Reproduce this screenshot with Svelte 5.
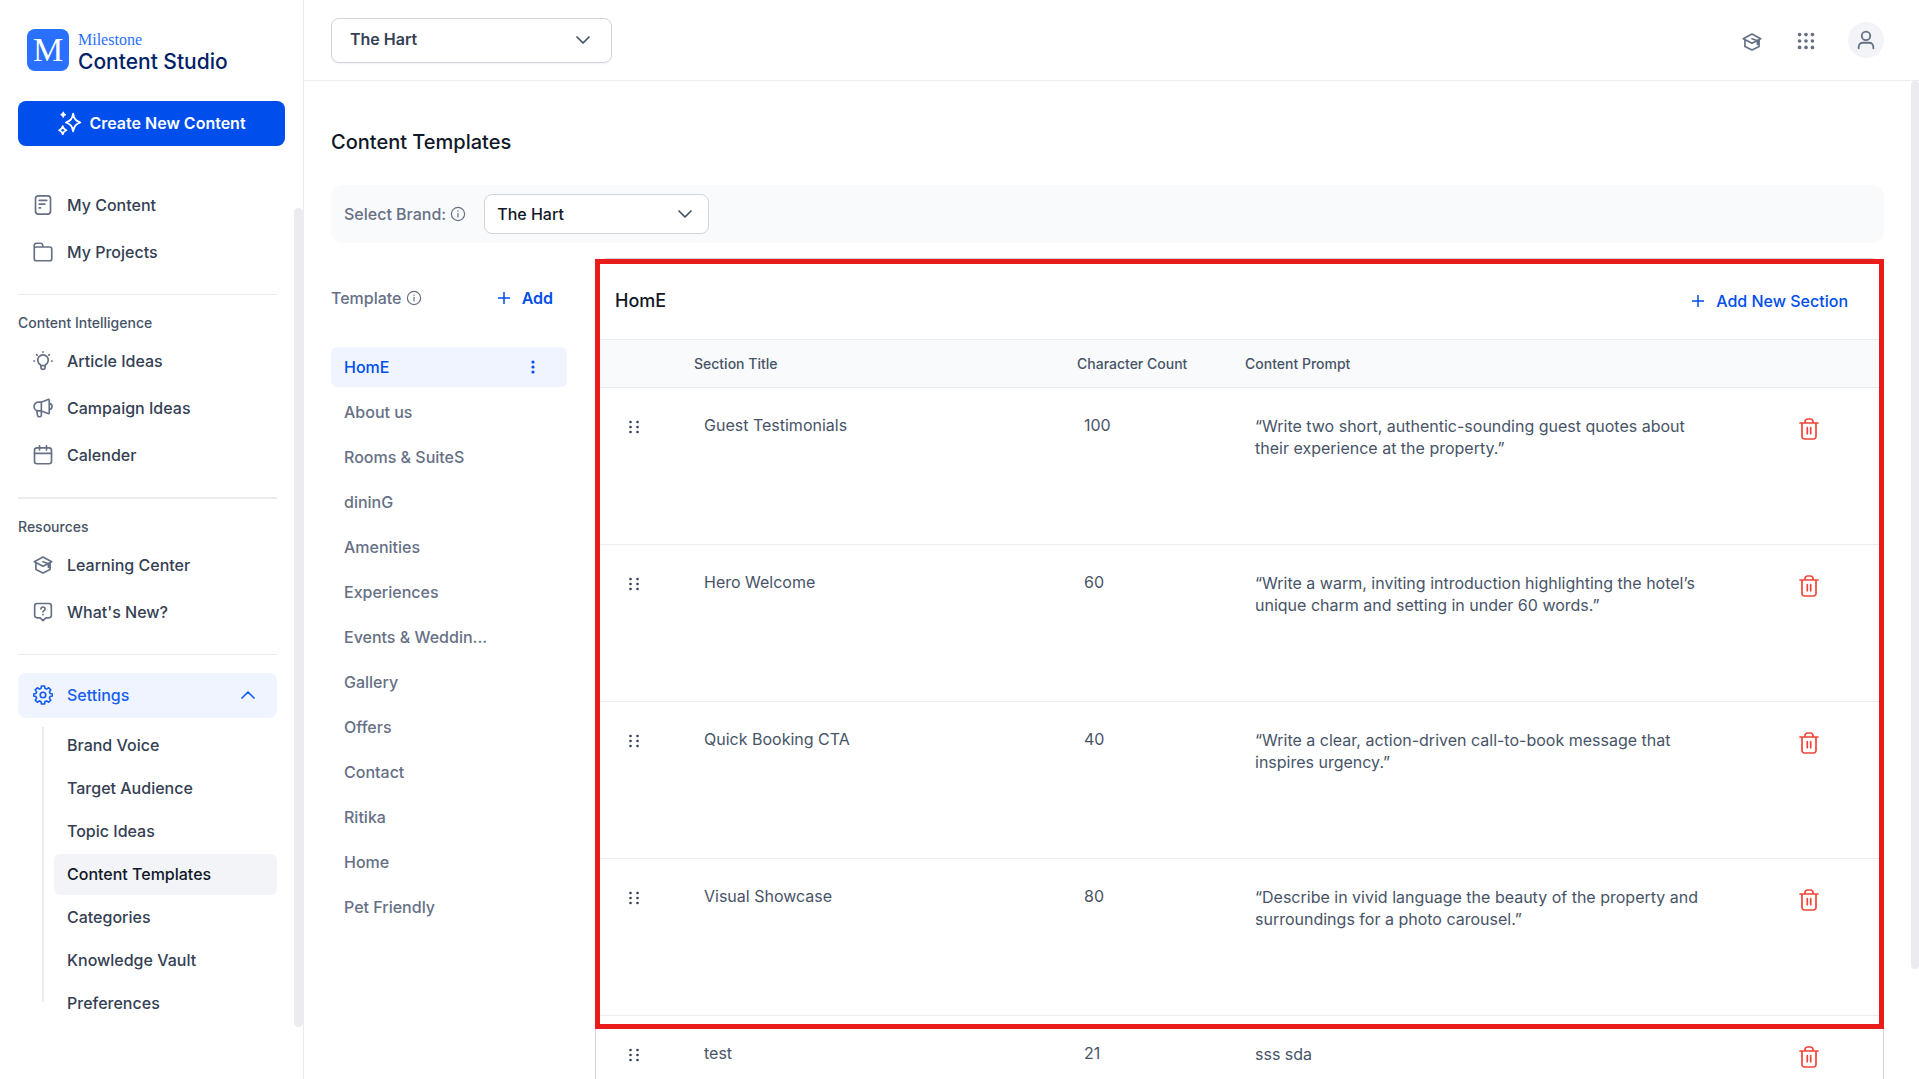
<script lang="ts">
    type NavItem = { label: string; icon: string };

    const mainLinks: NavItem[] = [
        { label: "My Content", icon: "file" },
        { label: "My Projects", icon: "folder" },
    ];

    const intelligenceLinks: NavItem[] = [
        { label: "Article Ideas", icon: "bulb" },
        { label: "Campaign Ideas", icon: "megaphone" },
        { label: "Calender", icon: "calendar" },
    ];

    const resourceLinks: NavItem[] = [
        { label: "Learning Center", icon: "learn" },
        { label: "What's New?", icon: "question" },
    ];

    const settingsLinks = [
        "Brand Voice",
        "Target Audience",
        "Topic Ideas",
        "Content Templates",
        "Categories",
        "Knowledge Vault",
        "Preferences",
    ];

    const templates = [
        "HomE",
        "About us",
        "Rooms & SuiteS",
        "dininG",
        "Amenities",
        "Experiences",
        "Events & Weddings",
        "Gallery",
        "Offers",
        "Contact",
        "Ritika",
        "Home",
        "Pet Friendly",
    ];

    const sections = [
        {
            title: "Guest Testimonials",
            count: 100,
            prompt: "“Write two short, authentic-sounding guest quotes about their experience at the property.”",
        },
        {
            title: "Hero Welcome",
            count: 60,
            prompt: "“Write a warm, inviting introduction highlighting the hotel’s unique charm and setting in under 60 words.”",
        },
        {
            title: "Quick Booking CTA",
            count: 40,
            prompt: "“Write a clear, action-driven call-to-book message that inspires urgency.”",
        },
        {
            title: "Visual Showcase",
            count: 80,
            prompt: "“Describe in vivid language the beauty of the property and surroundings for a photo carousel.”",
        },
        { title: "test", count: 21, prompt: "sss sda" },
    ];

    let activePage = $state("Content Templates");
    let activeTemplate = $state("HomE");
    let settingsOpen = $state(true);

    const shorten = (name: string) => (name.length > 15 ? `${name.slice(0, 15)}...` : name);
</script>

{#snippet icon(name: string)}
    <svg class="icon" viewBox="0 0 24 24" aria-hidden="true">
        {#if name === "file"}
            <rect x="3" y="1" width="18" height="22" rx="3.500" />
            <path d="M7.500 6.500h9M7.500 11h6.500M7.500 15.500h1.500" />
        {:else if name === "folder"}
            <path d="M1.500 7V4A2.500 2.500 0 0 1 4 1.500h5a2.500 2.500 0 0 1 2.500 2l.5 2.500M1.500 8.500V20A2.500 2.500 0 0 0 4 22.500h16a2.500 2.500 0 0 0 2.500-2.500V8.500A2.500 2.500 0 0 0 20 6H4a2.500 2.500 0 0 0-2.500 2.500z" />
        {:else if name === "bulb"}
            <path d="M9 17.500v-1A6.300 6.300 0 1 1 15 16.500v1z" />
            <path d="M9.500 17.500v2a2.500 2.500 0 0 0 5 0v-2M12 1v.6M4.300 4.300l.8.8M19.700 4.300l-.8.8M1 12h.8M22.200 12h.8" />
        {:else if name === "megaphone"}
            <path d="M10 5H6.500a4.800 4.800 0 0 0 0 10.500H10l8 3.200c.8.3 1.500 0 1.500-1V2.800c0-.9-.7-1.300-1.500-1zM10 5v10.500M4.500 15l1 6a1.800 1.800 0 0 0 1.800 1.500h1a1.800 1.800 0 0 0 1.700-2v-5M19.500 6.500c4.500 1 4.500 6 0 7.500" />
        {:else if name === "calendar"}
            <rect x="1.800" y="3.500" width="20.400" height="19" rx="3" />
            <path d="M1.800 10h20.400M7.800 1v5M16.200 1v5" />
        {:else if name === "learn"}
            <path d="M12 2.500 1.500 8 12 13.500l3-1.500M12 2.500 22.500 8 19 9.800M3.500 9.500v8L12 21.500l8.500-4v-8M12 8l6.500 2.500v4.500M15 12l3.500-1.500" />
        {:else if name === "question"}
            <path d="M5 1.800h14a3 3 0 0 1 3 3V16a3 3 0 0 1-3 3h-3.500L12 22.300 8.500 19H5a3 3 0 0 1-3-3V4.800a3 3 0 0 1 3-3z" />
            <path d="M9.500 8.300c.3-3.200 5.300-3 5 .2-.2 1.800-2.500 1.800-2.500 3.500M12 14.800v.4" />
        {:else if name === "gear"}
            <circle cx="12" cy="12" r="3.300" />
            <path d="M10.200 1.200h3.600l.6 2.900 1.900.8 2.500-1.600 2.500 2.500-1.600 2.500.8 1.900 2.900.6v2.400l-2.900.6-.8 1.900 1.600 2.500-2.500 2.500-2.500-1.600-1.900.8-.6 2.900h-3.600l-.6-2.900-1.900-.8-2.500 1.600-2.500-2.500 1.600-2.500-.8-1.900-2.900-.6v-2.400l2.900-.6.8-1.900-1.600-2.500 2.500-2.500 2.500 1.600 1.900-.8z" />
        {/if}
    </svg>
{/snippet}

{#snippet info()}
    <svg class="info" viewBox="0 0 16 16" aria-hidden="true">
        <circle cx="8" cy="8" r="6.600" />
        <path d="M8 7.300v3.700M8 4.900v.4" />
    </svg>
{/snippet}

{#snippet plus()}
    <svg class="plus" viewBox="0 0 12 12" aria-hidden="true">
        <path d="M6 0v12M0 6h12" />
    </svg>
{/snippet}

{#snippet chevron()}
    <svg class="chevron" viewBox="0 0 14 8" aria-hidden="true">
        <path d="m1 1 6 6 6-6" />
    </svg>
{/snippet}

{#snippet navList(items: NavItem[])}
    <ul class="nav-list">
        {#each items as item (item.label)}
            <li><a class="nav-link" href="#{item.icon}">{@render icon(item.icon)}{item.label}</a></li>
        {/each}
    </ul>
{/snippet}

<div class="app">
    <aside class="sidebar">
        <a class="brand" href="#home">
            <span class="brand-mark">M</span>
            <span class="brand-text">
                <span class="brand-top">Milestone</span>
                <span class="brand-name">Content Studio</span>
            </span>
        </a>

        <button class="create">
            <svg class="sparkles" viewBox="0 0 24 24" aria-hidden="true">
                <path d="M15.500 3.500c.9 4.900 2.300 7 7 8.500-4.700 1.500-6.100 3.600-7 8.500-.9-4.900-2.300-7-7-8.500 4.700-1.500 6.100-3.600 7-8.500z" />
                <path d="M5.500 15.500c.5 2.300 1.300 3.100 3.500 3.900-2.200.8-3 1.600-3.500 3.900-.5-2.300-1.300-3.100-3.500-3.900 2.200-.8 3-1.600 3.500-3.900z" />
                <path class="solid" d="M6 2c.3 1.500.8 2 2.300 2.500C6.800 5 6.300 5.500 6 7c-.3-1.500-.8-2-2.300-2.500C5.200 4 5.700 3.500 6 2z" />
            </svg>
            Create New Content
        </button>

        <nav class="nav">
            {@render navList(mainLinks)}
            <hr />
            <h2>Content Intelligence</h2>
            {@render navList(intelligenceLinks)}
            <hr class="thick" />
            <h2>Resources</h2>
            {@render navList(resourceLinks)}
            <hr />
            <button class="settings" aria-expanded={settingsOpen} onclick={() => (settingsOpen = !settingsOpen)}>
                {@render icon("gear")}
                Settings
                {@render chevron()}
            </button>
            {#if settingsOpen}
                <div class="submenu">
                    <span class="rail"></span>
                    <ul>
                        {#each settingsLinks as label (label)}
                            <li>
                                <a href="#settings" class:active={label === activePage} onclick={() => (activePage = label)}>
                                    {label}
                                </a>
                            </li>
                        {/each}
                    </ul>
                </div>
            {/if}
        </nav>
        <div class="thumb side-thumb"></div>
    </aside>

    <div class="main">
        <header class="topbar">
            <div class="select property">
                <select aria-label="Property">
                    <option>The Hart</option>
                </select>
                {@render chevron()}
            </div>
            <div class="tools">
                <button class="tool" aria-label="Learning center">{@render icon("learn")}</button>
                <button class="tool" aria-label="Apps">
                    <svg class="dots" viewBox="0 0 24 24" aria-hidden="true">
                        {#each [5, 12, 19] as y}
                            {#each [5, 12, 19] as x}
                                <circle cx={x} cy={y} r="2" />
                            {/each}
                        {/each}
                    </svg>
                </button>
                <button class="avatar" aria-label="Account">
                    <svg viewBox="0 0 24 24" aria-hidden="true">
                        <circle cx="12" cy="7.500" r="4.600" />
                        <path d="M4 21v-1.500a4.500 4.500 0 0 1 4.500-4.500h7a4.500 4.500 0 0 1 4.500 4.500V21" />
                    </svg>
                </button>
            </div>
        </header>

        <main class="page">
            <h1>Content Templates</h1>

            <div class="filter">
                <label for="brand">Select Brand:</label>
                {@render info()}
                <div class="select brand-select">
                    <select id="brand">
                        <option>The Hart</option>
                    </select>
                    {@render chevron()}
                </div>
            </div>

            <div class="columns">
                <section class="templates">
                    <div class="templates-head">
                        <span>Template</span>
                        {@render info()}
                        <button class="link-btn bold">{@render plus()}Add</button>
                    </div>
                    <ul>
                        {#each templates as name (name)}
                            <li class:selected={name === activeTemplate}>
                                <button class="template" onclick={() => (activeTemplate = name)}>{shorten(name)}</button>
                                {#if name === activeTemplate}
                                    <button class="more" aria-label="Template options">
                                        <svg viewBox="0 0 4 14" aria-hidden="true">
                                            <circle cx="2" cy="2" r="1.600" />
                                            <circle cx="2" cy="7" r="1.600" />
                                            <circle cx="2" cy="12" r="1.600" />
                                        </svg>
                                    </button>
                                {/if}
                            </li>
                        {/each}
                    </ul>
                </section>

                <section class="card">
                    <div class="card-head">
                        <h3>{activeTemplate}</h3>
                        <button class="link-btn">{@render plus()}Add New Section</button>
                    </div>
                    <table>
                        <colgroup>
                            <col class="col-drag" />
                            <col class="col-title" />
                            <col class="col-count" />
                            <col />
                            <col class="col-action" />
                        </colgroup>
                        <thead>
                            <tr>
                                <th></th>
                                <th>Section Title</th>
                                <th>Character Count</th>
                                <th>Content Prompt</th>
                                <th></th>
                            </tr>
                        </thead>
                        <tbody>
                            {#each sections as section (section.title)}
                                <tr>
                                    <td class="drag">
                                        <svg viewBox="0 0 10 14" aria-hidden="true">
                                            {#each [2, 7, 12] as y}
                                                <circle cx="1.500" cy={y} r="1.300" />
                                                <circle cx="8.500" cy={y} r="1.300" />
                                            {/each}
                                        </svg>
                                    </td>
                                    <td>{section.title}</td>
                                    <td class="count">{section.count}</td>
                                    <td class="prompt">{section.prompt}</td>
                                    <td class="action">
                                        <button aria-label="Delete {section.title}">
                                            <svg viewBox="0 0 20 22" aria-hidden="true">
                                                <path d="M1 5h18M6 5V3.500A2.500 2.500 0 0 1 8.500 1h3A2.500 2.500 0 0 1 14 3.500V5M3 5v13.500A2.500 2.500 0 0 0 5.500 21h9a2.500 2.500 0 0 0 2.500-2.500V5M8.300 9.700v6M11.700 9.700v6" />
                                            </svg>
                                        </button>
                                    </td>
                                </tr>
                            {/each}
                        </tbody>
                    </table>
                    <div class="highlight"></div>
                </section>
            </div>
            <div class="thumb page-thumb"></div>
        </main>
    </div>
</div>

<style>
    :global(body) {
        margin: 0;
        overflow: hidden;
    }

    .app {
        display: flex;
        height: 100vh;
        overflow: hidden;
        background: #fff;
        color: #344054;
        font-family: Inter, "Liberation Sans", sans-serif;
        font-size: 16px;
        line-height: 22px;
    }

    .app * {
        box-sizing: border-box;
    }

    ul {
        list-style: none;
        margin: 0;
        padding: 0;
    }

    h1, h2, h3 {
        margin: 0;
        font-weight: 500;
    }

    a {
        color: inherit;
        text-decoration: none;
    }

    button, select {
        font: inherit;
        color: inherit;
        background: none;
        border: none;
        padding: 0;
        cursor: pointer;
    }

    svg {
        display: block;
        flex: none;
        fill: none;
        stroke: currentColor;
        stroke-linecap: round;
        stroke-linejoin: round;
    }

    .icon {
        width: 20px;
        height: 20px;
        color: #667085;
        stroke-width: 2;
    }

    .info {
        width: 16px;
        height: 16px;
        margin-left: 4px;
        color: #667085;
        stroke-width: 1.2;
    }

    .plus {
        width: 12px;
        height: 12px;
        stroke-width: 1.5;
    }

    .chevron {
        width: 14px;
        height: 8px;
        stroke-width: 1.7;
    }

    .thumb {
        position: absolute;
        right: 0;
        background: #eaecf0;
        border-radius: 5px;
    }

    /* sidebar */
    .sidebar {
        position: relative;
        flex: none;
        width: 304px;
        padding: 29px 18px 0;
        border-right: 1px solid #eaecf0;
    }

    .side-thumb {
        top: 208px;
        bottom: 52px;
        width: 9px;
    }

    .brand {
        display: flex;
        gap: 9px;
        padding-left: 9px;
    }

    .brand-mark {
        width: 42px;
        height: 42px;
        border-radius: 8px;
        background: #2970ff;
        color: #fff;
        font: 34px/42px "Liberation Serif", serif;
        text-align: center;
    }

    .brand-text {
        display: flex;
        flex-direction: column;
    }

    .brand-top {
        color: #2970ff;
        font: 16px/22px "Liberation Serif", serif;
    }

    .brand-name {
        color: #002266;
        font-size: 21px;
        font-weight: 500;
        line-height: 22px;
    }

    .create {
        display: flex;
        align-items: center;
        justify-content: center;
        gap: 7px;
        width: 100%;
        height: 45px;
        margin-top: 28px;
        padding-bottom: 2px;
        border-radius: 8px;
        background: #004eeb;
        color: #fff;
        font-weight: 600;
    }

    .sparkles {
        width: 25px;
        height: 25px;
        stroke-width: 1.7;
    }

    .solid {
        fill: currentColor;
        stroke-width: 1;
    }

    .nav {
        padding: 36px 8px 0 0;
    }

    .nav-link {
        display: flex;
        align-items: center;
        gap: 14px;
        height: 47px;
        padding: 0 0 2px 15px;
        font-weight: 500;
    }

    hr {
        height: 1px;
        margin: 18px 0;
        border: none;
        background: #eaecf0;
    }

    .thick {
        height: 2px;
    }

    h2 {
        margin-bottom: 5px;
        color: #475467;
        font-size: 14px;
        line-height: 20px;
    }

    .settings {
        display: flex;
        align-items: center;
        gap: 14px;
        width: 100%;
        height: 45px;
        padding: 0 22px 2px 15px;
        border-radius: 8px;
        background: #eff4ff;
        color: #155eef;
        font-weight: 500;
    }

    .settings .icon {
        color: #155eef;
    }

    .settings .chevron {
        margin-left: auto;
        transform: rotate(180deg);
    }

    .submenu {
        display: flex;
        gap: 10px;
        padding: 7px 0 0 24px;
    }

    .rail {
        width: 2px;
        margin: 2px 0 22px;
        background: #eaecf0;
    }

    .submenu ul {
        flex: 1;
        display: grid;
        gap: 2px;
    }

    .submenu a {
        display: block;
        padding: 9px 13px 10px;
        border-radius: 6px;
        font-weight: 500;
    }

    .submenu .active {
        background: #f2f4f7;
        color: #101828;
    }

    /* top bar */
    .main {
        flex: 1;
        display: flex;
        flex-direction: column;
        min-width: 0;
    }

    .topbar {
        display: flex;
        flex: none;
        align-items: center;
        justify-content: space-between;
        height: 81px;
        padding: 0 35px 0 27px;
        border-bottom: 1px solid #eaecf0;
    }

    .select {
        display: grid;
        align-items: center;
    }

    .select select, .select .chevron {
        grid-area: 1 / 1;
    }

    .select select {
        width: 100%;
        height: 100%;
        appearance: none;
        border: 1px solid #d0d5dd;
        border-radius: 8px;
        background: #fff;
        font-weight: 500;
    }

    .select .chevron {
        justify-self: end;
        color: #475467;
        pointer-events: none;
    }

    .property {
        width: 281px;
        height: 45px;
    }

    .property select {
        padding: 0 18px 2px;
        font-weight: 600;
        box-shadow: 0 1px 2px rgba(16, 24, 40, 0.05);
    }

    .property .chevron {
        margin-right: 22px;
    }

    .tools {
        display: flex;
        align-items: center;
        gap: 31px;
        color: #667085;
    }

    .tool {
        display: grid;
        place-items: end center;
        width: 23px;
        height: 24px;
    }

    .dots {
        width: 22px;
        height: 22px;
        fill: currentColor;
        stroke: none;
    }

    .avatar {
        display: grid;
        place-items: center;
        width: 36px;
        height: 36px;
        border-radius: 50%;
        background: #f2f4f7;
    }

    .avatar svg {
        width: 22px;
        height: 22px;
        stroke-width: 2;
    }

    /* page */
    .page {
        position: relative;
        flex: 1;
        min-height: 0;
        padding: 47px 35px 0 27px;
        overflow: hidden;
    }

    .page-thumb {
        top: 0;
        width: 8px;
        height: 89%;
    }

    h1 {
        color: #101828;
        font-size: 20px;
        line-height: 28px;
    }

    .filter {
        display: flex;
        align-items: center;
        height: 58px;
        margin: 29px 0 15px;
        padding: 0 13px;
        border-radius: 12px;
        background: #f9fafb;
        color: #667085;
        font-weight: 500;
    }

    .brand-select {
        width: 225px;
        height: 40px;
        margin-left: 18px;
    }

    .brand-select select {
        padding: 0 12px;
        color: #101828;
    }

    .brand-select .chevron {
        margin-right: 17px;
    }

    .columns {
        display: flex;
        align-items: flex-start;
        gap: 28px;
    }

    .templates {
        flex: none;
        width: 236px;
        color: #667085;
        font-weight: 500;
    }

    .templates-head {
        display: flex;
        align-items: center;
        height: 80px;
        margin-bottom: 9px;
    }

    .templates-head .link-btn {
        margin: 0 14px 0 auto;
    }

    .link-btn {
        display: flex;
        align-items: center;
        gap: 12px;
        color: #004eeb;
        font-weight: 500;
    }

    .bold {
        font-weight: 600;
    }

    .templates ul {
        display: grid;
        gap: 5px;
    }

    .templates li {
        display: flex;
        align-items: center;
        justify-content: space-between;
        height: 40px;
        padding: 0 32px 0 13px;
        border-radius: 6px;
    }

    .templates .selected {
        background: #eff4ff;
        color: #004eeb;
    }

    .template {
        text-align: left;
    }

    .more svg {
        width: 4px;
        height: 14px;
        fill: currentColor;
        stroke: none;
    }

    /* sections table */
    .card {
        position: relative;
        flex: 1;
        min-width: 0;
        border: 1px solid #d0d5dd;
        border-radius: 12px;
    }

    .card-head {
        display: flex;
        align-items: center;
        justify-content: space-between;
        height: 81px;
        padding: 3px 35px 0 19px;
        border-bottom: 1px solid #eaecf0;
    }

    h3 {
        color: #101828;
        font-size: 18px;
        line-height: 28px;
    }

    table {
        width: 100%;
        table-layout: fixed;
        border-spacing: 0;
    }

    .col-drag {
        width: 86px;
    }

    .col-title {
        width: 383px;
    }

    .col-count {
        width: 168px;
    }

    .col-action {
        width: 148px;
    }

    th {
        height: 48px;
        padding: 0 12px;
        border-bottom: 1px solid #eaecf0;
        background: #f9fafb;
        color: #475467;
        font-size: 14px;
        font-weight: 500;
        text-align: left;
    }

    td {
        height: 157px;
        padding: 26px 22px 0;
        border-bottom: 1px solid #eaecf0;
        color: #475467;
        vertical-align: top;
    }

    .drag {
        padding: 32px 0 0 33px;
        color: #344054;
    }

    .drag svg {
        width: 10px;
        height: 14px;
        fill: currentColor;
        stroke: none;
    }

    .count {
        padding-left: 19px;
    }

    .prompt {
        padding: 27px 30px 0 22px;
    }

    .action {
        padding: 30px 0 0;
    }

    .action button {
        display: block;
        margin: 0 auto;
        color: #f04438;
    }

    .action svg {
        width: 20px;
        height: 22px;
        stroke-width: 1.7;
    }

    .highlight {
        position: absolute;
        top: 0;
        left: -1px;
        right: -1px;
        height: 770px;
        border: 5px solid #e91c1c;
        pointer-events: none;
    }
</style>
